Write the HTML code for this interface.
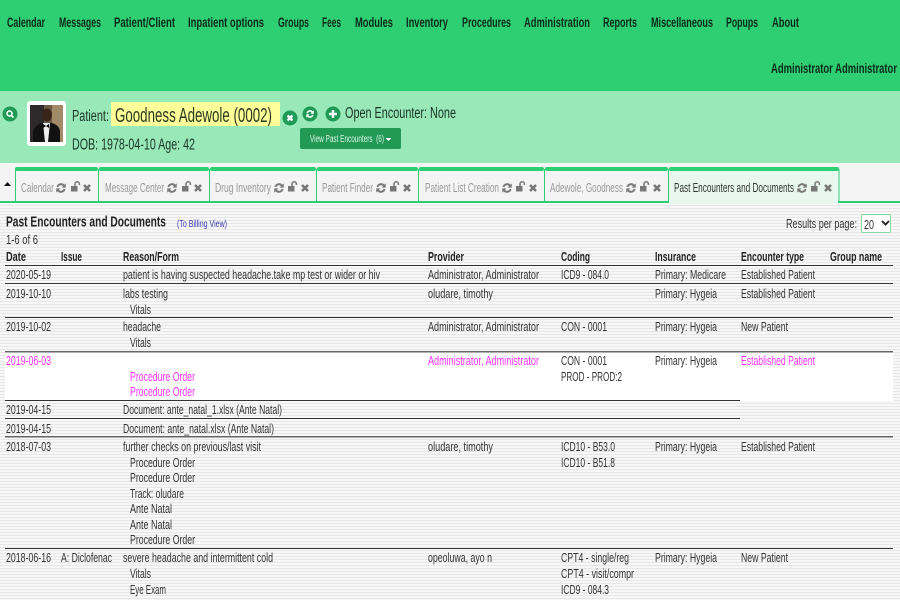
<!DOCTYPE html>
<html><head><meta charset="utf-8"><title>Past Encounters and Documents</title>
<style>
html,body{margin:0;padding:0;width:900px;height:600px;overflow:hidden;background:#fff}
svg{display:block;filter:blur(.25px)}
text{font-family:"Liberation Sans",sans-serif;font-size:13px;fill:#333;white-space:pre}
.n{font-weight:bold;fill:#0c2a1a;font-size:13.5px}
.h{font-weight:bold;fill:#222;font-size:13px}
.m{fill:#ff33ff}
.g{fill:#999;font-size:13px}
.p{fill:#1c3527}
</style></head><body>
<svg xmlns="http://www.w3.org/2000/svg" width="900" height="600" viewBox="0 0 900 600">
<defs>
<pattern id="st" width="4" height="3" patternUnits="userSpaceOnUse"><rect width="4" height="3" fill="#f7f7f7"/><rect y="1" width="4" height="1" fill="#e7e7e7"/></pattern>
<g id="ic"><g transform="scale(1.25)"><path d="M-3.6 -1a3.8 3.8 0 0 1 6.4-1.7l1-1v3.4h-3.4l1.2-1.2a2.2 2.2 0 0 0-3.8.9zM3.6 1a3.8 3.8 0 0 1-6.4 1.7l-1 1v-3.4h3.4l-1.2 1.2a2.2 2.2 0 0 0 3.8-.9z" fill="#777"/></g></g>
<g id="lk"><rect x="-4" y="-1" width="6.500" height="5.500" fill="#777"/><path d="M0 -1v-2a2.200 2.200 0 0 1 4.400 0v1" fill="none" stroke="#777" stroke-width="1.500"/></g>
<g id="cl"><path d="M-3 -3L3 3M3 -3L-3 3" stroke="#777" stroke-width="2.600"/></g>
</defs>
<rect width="900" height="600" fill="url(#st)"/>
<rect width="900" height="91" fill="#2ecf73"/>
<rect y="91" width="900" height="72" fill="#98e8b8"/>
<rect y="163" width="900" height="39" fill="#f4f4f4"/>

<text class="n" x="7" y="27" textLength="38" lengthAdjust="spacingAndGlyphs">Calendar</text>
<text class="n" x="59" y="27" textLength="42" lengthAdjust="spacingAndGlyphs">Messages</text>
<text class="n" x="114" y="27" textLength="61" lengthAdjust="spacingAndGlyphs">Patient/Client</text>
<text class="n" x="188" y="27" textLength="76" lengthAdjust="spacingAndGlyphs">Inpatient options</text>
<text class="n" x="278" y="27" textLength="31" lengthAdjust="spacingAndGlyphs">Groups</text>
<text class="n" x="322" y="27" textLength="19" lengthAdjust="spacingAndGlyphs">Fees</text>
<text class="n" x="355" y="27" textLength="38" lengthAdjust="spacingAndGlyphs">Modules</text>
<text class="n" x="406" y="27" textLength="42" lengthAdjust="spacingAndGlyphs">Inventory</text>
<text class="n" x="462" y="27" textLength="49" lengthAdjust="spacingAndGlyphs">Procedures</text>
<text class="n" x="524" y="27" textLength="66" lengthAdjust="spacingAndGlyphs">Administration</text>
<text class="n" x="603" y="27" textLength="34" lengthAdjust="spacingAndGlyphs">Reports</text>
<text class="n" x="651" y="27" textLength="62" lengthAdjust="spacingAndGlyphs">Miscellaneous</text>
<text class="n" x="726" y="27" textLength="32" lengthAdjust="spacingAndGlyphs">Popups</text>
<text class="n" x="772" y="27" textLength="27" lengthAdjust="spacingAndGlyphs">About</text>
<text class="n" x="771" y="73" textLength="126" lengthAdjust="spacingAndGlyphs">Administrator Administrator</text>

<circle cx="10" cy="114" r="7.500" fill="#1f9a55"/>
<circle cx="9.500" cy="113.500" r="2.500" fill="none" stroke="#fff" stroke-width="1.500"/><path d="M11.500 115.500l2 2" stroke="#fff" stroke-width="1.600"/>
<rect x="27" y="101" width="39" height="45" rx="3" fill="#fff"/>
<rect x="30" y="105" width="33" height="37" fill="#6b5a48"/>
<rect x="30" y="105" width="14" height="37" fill="#2c2a2a"/>
<rect x="52" y="105" width="11" height="37" fill="#a08a68"/>
<ellipse cx="47" cy="115" rx="5" ry="6.500" fill="#3a2418"/>
<path d="M33 142v-11q2-6 9-8h10q7 2 8 8v11z" fill="#111"/>
<path d="M43 123h7l-2 19h-3z" fill="#eee"/>
<path d="M43 124l3 2 3-2v4l-3-2-3 2z" fill="#000"/>

<text class="p" x="72" y="121" textLength="37" lengthAdjust="spacingAndGlyphs" style="font-size:15.500px">Patient:</text>
<rect x="111" y="102" width="169" height="24" fill="#ffff99"/>
<text x="115" y="122" textLength="157" lengthAdjust="spacingAndGlyphs" style="font-size:20px;fill:#2a3a20">Goodness Adewole (0002)</text>
<text class="p" x="72" y="149.500" textLength="123" lengthAdjust="spacingAndGlyphs" style="font-size:15.500px">DOB: 1978-04-10 Age: 42</text>

<circle cx="290" cy="118" r="7.500" fill="#1f9a55"/><path d="M287.500 115.500l5 5M292.500 115.500l-5 5" stroke="#fff" stroke-width="2.400"/>
<circle cx="310" cy="114" r="7.500" fill="#1f9a55"/>
<g transform="translate(310 114)"><path d="M-3.600 -1a3.800 3.800 0 0 1 6.400-1.700l1-1v3.400h-3.400l1.200-1.200a2.200 2.200 0 0 0-3.800.9zM3.600 1a3.800 3.800 0 0 1-6.400 1.700l-1 1v-3.400h3.400l-1.200 1.200a2.200 2.200 0 0 0 3.800-.9z" fill="#fff"/></g>
<circle cx="333" cy="114" r="7.500" fill="#1f9a55"/><path d="M333 110v8M329 114h8" stroke="#fff" stroke-width="2.400"/>
<text class="p" x="345" y="118" textLength="111" lengthAdjust="spacingAndGlyphs" style="font-size:15.500px">Open Encounter: None</text>
<rect x="300" y="128" width="101" height="21" rx="2" fill="#229a56"/>
<text x="310" y="142" textLength="74" lengthAdjust="spacingAndGlyphs" style="font-size:10px;fill:#d8f5e4">View Past Encounters  (6)</text>
<path d="M385.500 138h6l-3 3z" fill="#fff"/>

<path d="M4 186l3.500-4 3.500 4z" fill="#111"/>
<rect y="201" width="900" height="2" fill="#2ecf73"/>
<rect x="669" y="171" width="169" height="33" fill="#e8f8ef"/>
<rect y="204" width="900" height="1" fill="#f4f4f4"/>
<g fill="#2ecf73">
<rect x="15" y="167" width="83" height="4" rx="2"/><rect x="99" y="167" width="110" height="4" rx="2"/><rect x="210" y="167" width="106" height="4" rx="2"/><rect x="317" y="167" width="101" height="4" rx="2"/><rect x="419" y="167" width="125" height="4" rx="2"/><rect x="545" y="167" width="123" height="4" rx="2"/><rect x="669" y="167" width="170" height="4" rx="2"/>
<rect x="15" y="169" width="1" height="33"/><rect x="98" y="169" width="1" height="33"/><rect x="209" y="169" width="1" height="33"/><rect x="316" y="169" width="1" height="33"/><rect x="418" y="169" width="1" height="33"/><rect x="544" y="169" width="1" height="33"/><rect x="668" y="169" width="1" height="33"/><rect x="838.500" y="169" width="1" height="34"/>
</g>
<rect x="669" y="201" width="169" height="3" fill="#e8f8ef"/>

<text class="g" x="21" y="192" textLength="33" lengthAdjust="spacingAndGlyphs">Calendar</text>
<text class="g" x="105" y="192" textLength="59" lengthAdjust="spacingAndGlyphs">Message Center</text>
<text class="g" x="215" y="192" textLength="56" lengthAdjust="spacingAndGlyphs">Drug Inventory</text>
<text class="g" x="322" y="192" textLength="51" lengthAdjust="spacingAndGlyphs">Patient Finder</text>
<text class="g" x="425" y="192" textLength="74" lengthAdjust="spacingAndGlyphs">Patient List Creation</text>
<text class="g" x="550" y="192" textLength="73" lengthAdjust="spacingAndGlyphs">Adewole, Goodness</text>
<text x="674" y="192" textLength="120" lengthAdjust="spacingAndGlyphs">Past Encounters and Documents</text>
<use href="#ic" x="61" y="188"/><use href="#lk" x="75" y="187"/><use href="#cl" x="87" y="188"/>
<use href="#ic" x="172" y="188"/><use href="#lk" x="186" y="187"/><use href="#cl" x="198" y="188"/>
<use href="#ic" x="279" y="188"/><use href="#lk" x="292" y="187"/><use href="#cl" x="305" y="188"/>
<use href="#ic" x="381" y="188"/><use href="#lk" x="394" y="187"/><use href="#cl" x="407" y="188"/>
<use href="#ic" x="507" y="188"/><use href="#lk" x="520" y="187"/><use href="#cl" x="533" y="188"/>
<use href="#ic" x="631" y="188"/><use href="#lk" x="644" y="187"/><use href="#cl" x="657" y="188"/>
<use href="#ic" x="802" y="188"/><use href="#lk" x="815" y="187"/><use href="#cl" x="828" y="188"/>

<text x="6" y="226.500" textLength="160" lengthAdjust="spacingAndGlyphs" style="font-size:15px;font-weight:bold;fill:#222">Past Encounters and Documents</text>
<text x="177" y="227" textLength="50" lengthAdjust="spacingAndGlyphs" style="font-size:10.500px;fill:#3a3ab0">(To Billing View)</text>
<text x="6" y="244" textLength="32" lengthAdjust="spacingAndGlyphs">1-6 of 6</text>
<text x="786" y="228" textLength="71" lengthAdjust="spacingAndGlyphs">Results per page:</text>
<rect x="861.500" y="214.500" width="29" height="18" rx="1" fill="#fff" stroke="#7fdca6"/>
<text x="864" y="229" textLength="10" lengthAdjust="spacingAndGlyphs">20</text>
<path d="M882 221l3.500 3.500 3.500-3.500" fill="none" stroke="#222" stroke-width="1.900"/>

<text class="h" x="6" y="261" textLength="20" lengthAdjust="spacingAndGlyphs">Date</text>
<text class="h" x="61" y="261" textLength="21" lengthAdjust="spacingAndGlyphs">Issue</text>
<text class="h" x="123" y="261" textLength="56" lengthAdjust="spacingAndGlyphs">Reason/Form</text>
<text class="h" x="428" y="261" textLength="36" lengthAdjust="spacingAndGlyphs">Provider</text>
<text class="h" x="561" y="261" textLength="29" lengthAdjust="spacingAndGlyphs">Coding</text>
<text class="h" x="655" y="261" textLength="41" lengthAdjust="spacingAndGlyphs">Insurance</text>
<text class="h" x="741" y="261" textLength="63" lengthAdjust="spacingAndGlyphs">Encounter type</text>
<text class="h" x="830" y="261" textLength="52" lengthAdjust="spacingAndGlyphs">Group name</text>

<rect x="5" y="352" width="888" height="49" fill="#fff"/>
<g fill="#333">
<rect x="5" y="265" width="888" height="1"/>
<rect x="5" y="283" width="888" height="1"/>
<rect x="5" y="317" width="888" height="1"/>
</g>
<rect x="5" y="351" width="888" height="1.500" fill="#666"/>
<rect x="5" y="400" width="735" height="1" fill="#333"/>
<rect x="5" y="418" width="735" height="1" fill="#333"/>
<rect x="5" y="436" width="888" height="1.500" fill="#666"/>
<rect x="5" y="548" width="888" height="1" fill="#333"/>

<text x="6" y="279" textLength="45" lengthAdjust="spacingAndGlyphs">2020-05-19</text>
<text x="123" y="279" textLength="257" lengthAdjust="spacingAndGlyphs">patient is having suspected headache.take mp test or wider or hiv</text>
<text x="428" y="279" textLength="111" lengthAdjust="spacingAndGlyphs">Administrator, Administrator</text>
<text x="561" y="279" textLength="48" lengthAdjust="spacingAndGlyphs">ICD9 - 084.0</text>
<text x="655" y="279" textLength="71" lengthAdjust="spacingAndGlyphs">Primary: Medicare</text>
<text x="741" y="279" textLength="74" lengthAdjust="spacingAndGlyphs">Established Patient</text>

<text x="6" y="298" textLength="45" lengthAdjust="spacingAndGlyphs">2019-10-10</text>
<text x="123" y="298" textLength="45" lengthAdjust="spacingAndGlyphs">labs testing</text>
<text x="130" y="314" textLength="21" lengthAdjust="spacingAndGlyphs">Vitals</text>
<text x="428" y="298" textLength="65" lengthAdjust="spacingAndGlyphs">oludare, timothy</text>
<text x="655" y="298" textLength="62" lengthAdjust="spacingAndGlyphs">Primary: Hygeia</text>
<text x="741" y="298" textLength="74" lengthAdjust="spacingAndGlyphs">Established Patient</text>

<text x="6" y="331" textLength="45" lengthAdjust="spacingAndGlyphs">2019-10-02</text>
<text x="123" y="331" textLength="38" lengthAdjust="spacingAndGlyphs">headache</text>
<text x="130" y="347" textLength="21" lengthAdjust="spacingAndGlyphs">Vitals</text>
<text x="428" y="331" textLength="111" lengthAdjust="spacingAndGlyphs">Administrator, Administrator</text>
<text x="561" y="331" textLength="46" lengthAdjust="spacingAndGlyphs">CON - 0001</text>
<text x="655" y="331" textLength="62" lengthAdjust="spacingAndGlyphs">Primary: Hygeia</text>
<text x="741" y="331" textLength="47" lengthAdjust="spacingAndGlyphs">New Patient</text>

<text class="m" x="6" y="365" textLength="45" lengthAdjust="spacingAndGlyphs">2019-06-03</text>
<text class="m" x="130" y="381" textLength="65" lengthAdjust="spacingAndGlyphs">Procedure Order</text>
<text class="m" x="130" y="396" textLength="65" lengthAdjust="spacingAndGlyphs">Procedure Order</text>
<text class="m" x="428" y="365" textLength="111" lengthAdjust="spacingAndGlyphs">Administrator, Administrator</text>
<text x="561" y="365" textLength="46" lengthAdjust="spacingAndGlyphs">CON - 0001</text>
<text x="561" y="381" textLength="61" lengthAdjust="spacingAndGlyphs">PROD - PROD:2</text>
<text x="655" y="365" textLength="62" lengthAdjust="spacingAndGlyphs">Primary: Hygeia</text>
<text class="m" x="741" y="365" textLength="74" lengthAdjust="spacingAndGlyphs">Established Patient</text>

<text x="6" y="414" textLength="45" lengthAdjust="spacingAndGlyphs">2019-04-15</text>
<text x="123" y="414" textLength="159" lengthAdjust="spacingAndGlyphs">Document: ante_natal_1.xlsx (Ante Natal)</text>
<text x="6" y="433" textLength="45" lengthAdjust="spacingAndGlyphs">2019-04-15</text>
<text x="123" y="433" textLength="151" lengthAdjust="spacingAndGlyphs">Document: ante_natal.xlsx (Ante Natal)</text>

<text x="6" y="451" textLength="45" lengthAdjust="spacingAndGlyphs">2018-07-03</text>
<text x="123" y="451" textLength="138" lengthAdjust="spacingAndGlyphs">further checks on previous/last visit</text>
<text x="130" y="467" textLength="65" lengthAdjust="spacingAndGlyphs">Procedure Order</text>
<text x="130" y="482" textLength="65" lengthAdjust="spacingAndGlyphs">Procedure Order</text>
<text x="130" y="498" textLength="54" lengthAdjust="spacingAndGlyphs">Track: oludare</text>
<text x="130" y="513" textLength="42" lengthAdjust="spacingAndGlyphs">Ante Natal</text>
<text x="130" y="529" textLength="42" lengthAdjust="spacingAndGlyphs">Ante Natal</text>
<text x="130" y="544" textLength="65" lengthAdjust="spacingAndGlyphs">Procedure Order</text>
<text x="428" y="451" textLength="65" lengthAdjust="spacingAndGlyphs">oludare, timothy</text>
<text x="561" y="451" textLength="54" lengthAdjust="spacingAndGlyphs">ICD10 - B53.0</text>
<text x="561" y="467" textLength="54" lengthAdjust="spacingAndGlyphs">ICD10 - B51.8</text>
<text x="655" y="451" textLength="62" lengthAdjust="spacingAndGlyphs">Primary: Hygeia</text>
<text x="741" y="451" textLength="74" lengthAdjust="spacingAndGlyphs">Established Patient</text>

<text x="6" y="562" textLength="45" lengthAdjust="spacingAndGlyphs">2018-06-16</text>
<text x="61" y="562" textLength="51" lengthAdjust="spacingAndGlyphs">A: Diclofenac</text>
<text x="123" y="562" textLength="150" lengthAdjust="spacingAndGlyphs">severe headache and intermittent cold</text>
<text x="130" y="578" textLength="21" lengthAdjust="spacingAndGlyphs">Vitals</text>
<text x="130" y="594" textLength="36" lengthAdjust="spacingAndGlyphs">Eye Exam</text>
<text x="428" y="562" textLength="64" lengthAdjust="spacingAndGlyphs">opeoluwa, ayo n</text>
<text x="561" y="562" textLength="68" lengthAdjust="spacingAndGlyphs">CPT4 - single/reg</text>
<text x="561" y="578" textLength="73" lengthAdjust="spacingAndGlyphs">CPT4 - visit/compr</text>
<text x="561" y="594" textLength="48" lengthAdjust="spacingAndGlyphs">ICD9 - 084.3</text>
<text x="655" y="562" textLength="62" lengthAdjust="spacingAndGlyphs">Primary: Hygeia</text>
<text x="741" y="562" textLength="47" lengthAdjust="spacingAndGlyphs">New Patient</text>
</svg>
</body></html>
